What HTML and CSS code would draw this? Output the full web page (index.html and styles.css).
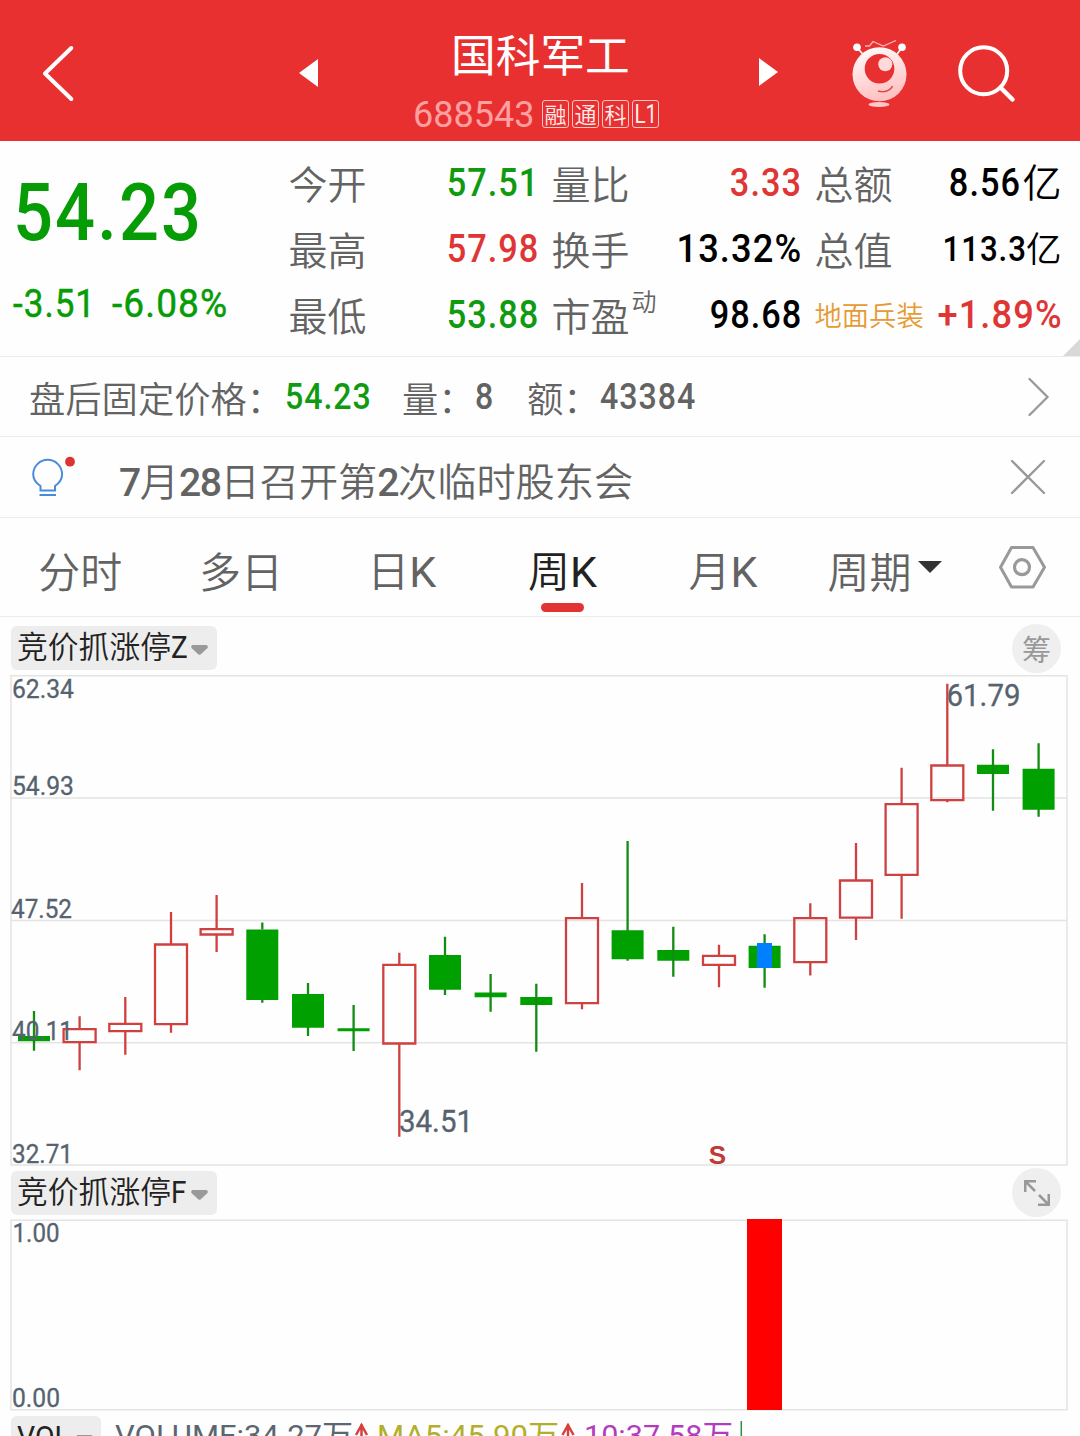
FILE: index.html
```html
<!DOCTYPE html>
<html lang="zh-CN">
<head>
<meta charset="utf-8">
<title>国科军工 688543</title>
<link rel="stylesheet" href="styles.css">
</head>
<body>
<header class="header">
  <svg class="nav-icon" width="108" height="141" viewBox="0 0 108 141"><path d="M71.300 48 45 73.500 71.300 99" fill="none" stroke="#fff" stroke-width="4" stroke-linecap="round" stroke-linejoin="round"/></svg>
  <svg class="prev" width="20" height="28" viewBox="0 0 20 28"><path d="M19 0v28L0 14z" fill="#fff"/></svg>
  <div class="title-block">
    <h1 class="title">国科军工</h1>
    <div class="sub">
      <span class="code">688543</span>
      <span class="tag">融</span><span class="tag">通</span><span class="tag">科</span><span class="tag"><span class="tag-latin">L1</span></span>
    </div>
  </div>
  <svg class="next" width="20" height="28" viewBox="0 0 20 28"><path d="M0 0v28L19 14z" fill="#fff"/></svg>
  <svg class="tools" width="240" height="141" viewBox="840 0 240 141">
    <defs><linearGradient id="bot" x1="0" y1="0" x2="0.300" y2="1"><stop offset="0" stop-color="#fff"/><stop offset="1" stop-color="#ffc2c2"/></linearGradient></defs>
    <g stroke="#fff" stroke-width="1.600" fill="none"><path d="M857 47.500l7 8M902 47.500l-6 8"/><path d="M865 46h4.500l3.500-4.500L883.300 46 896 40.500" stroke="#ffb5b5" stroke-width="1.300"/></g>
    <circle cx="857" cy="47.300" r="3.800" fill="#fff"/><circle cx="902" cy="47.300" r="3.800" fill="#fff"/>
    <circle cx="879.500" cy="74.300" r="27" fill="url(#bot)"/>
    <circle cx="879.500" cy="68.700" r="14.800" fill="#e93030"/>
    <circle cx="885.300" cy="64.300" r="7" fill="#ffdada"/>
    <path d="M878 91q10.500 2.500 14.600-4.800" fill="none" stroke="#d94b4b" stroke-width="1.500"/>
    <ellipse cx="879" cy="104.500" rx="10.500" ry="2.400" fill="#ffc8c8"/>
    <circle cx="983.700" cy="70.700" r="23.500" fill="none" stroke="#fff" stroke-width="4"/>
    <path d="M1000.500 87.500 1012.500 99.500" stroke="#fff" stroke-width="4.500" stroke-linecap="round"/>
  </svg>
</header>

<section class="quote">
  <div class="price">
    <div class="last num">54.23</div>
    <div class="change"><span class="num">-3.51</span><span class="num pct">-6.08%</span></div>
  </div>
  <div class="cell"><span>今开</span><b class="num green">57.51</b></div>
  <div class="cell"><span>量比</span><b class="num red">3.33</b></div>
  <div class="cell"><span>总额</span><b class="money"><i class="num">8.56</i><i class="unit">亿</i></b></div>
  <div class="cell"><span>最高</span><b class="num red">57.98</b></div>
  <div class="cell"><span>换手</span><b class="num pct">13.32%</b></div>
  <div class="cell"><span>总值</span><b class="money small"><i class="num">113.3</i><i class="unit">亿</i></b></div>
  <div class="cell"><span>最低</span><b class="num green">53.88</b></div>
  <div class="cell"><span>市盈<sup class="dyn">动</sup></span><b class="num">98.68</b></div>
  <div class="cell"><span class="sector">地面兵装</span><b class="num red pct">+1.89%</b></div>
  <svg class="corner" width="17" height="17" viewBox="0 0 17 17"><path d="M17 0v17H0z" fill="#d8d8d8"/></svg>
</section>

<section class="row after">
  <span class="k1">盘后固定价格：</span><span class="num v1 green">54.23</span>
  <span class="k2">量：</span><span class="num v2">8</span>
  <span class="k3">额：</span><span class="num v3">43384</span>
  <svg class="row-icon" width="24" height="40" viewBox="0 0 24 40"><path d="M2.500 2 20.500 20 2.500 38" fill="none" stroke="#999" stroke-width="2.300" stroke-linecap="round"/></svg>
</section>

<section class="row notice">
  <svg class="bulb" width="48" height="44" viewBox="30 454 48 44"><g fill="none" stroke="#4a8bd8" stroke-width="2"><path d="M40.500 490.500v-4.500c-4.500-2.800-7.300-6.700-7.300-11.700a14.400 14.400 0 0 1 28.900 0c0 5-2.800 8.900-7.100 11.700v4.500z"/><path d="M39.500 495H56"/></g><circle cx="70" cy="461.700" r="4.900" fill="#dc3434"/></svg>
  <span class="notice-text"><i>7</i>月<i>28</i>日召开第<i>2</i>次临时股东会</span>
  <svg class="row-icon close" width="36" height="36" viewBox="0 0 36 36"><path d="M2 2 34 34M34 2 2 34" fill="none" stroke="#999" stroke-width="2.300" stroke-linecap="round"/></svg>
</section>

<nav class="tabs">
  <span class="tab">分时</span>
  <span class="tab">多日</span>
  <span class="tab">日<i>K</i></span>
  <span class="tab active">周<i>K</i></span>
  <span class="tab">月<i>K</i></span>
  <span class="tab period">周期<svg width="24" height="12" viewBox="0 0 24 12"><path d="M0 0h24L12 12z" fill="#333"/></svg></span>
  <svg class="gear" width="48" height="44" viewBox="998 545 48 44"><g fill="none" stroke="#999" stroke-linejoin="round"><path d="M1011.500 547.500h21.500l11.500 19.700-11.500 19.800h-21.500L1000.500 567.200z" stroke-width="3"/><circle cx="1022" cy="567.200" r="7.500" stroke-width="3.200"/></g></svg>
</nav>

<main class="charts">
  <div class="bar">
    <span class="chip"><span>竞价抓涨停<i>Z</i></span><svg width="17" height="10" viewBox="0 0 17 10"><path d="M1.500 0h14q2 1 1 3L9.500 9.500q-1 .7-2 0L.5 3q-1-2 1-3z" fill="#999"/></svg></span>
    <span class="round">筹</span>
  </div>
  <svg class="plot" width="1080" height="492" viewBox="0 675 1080 492">
    <g fill="none" stroke="#e4e4e4" stroke-width="1.500"><path d="M11 675.700H1067V1165H11zM11 798H1067M11 920.400H1067M11 1042.800H1067"/></g>
    <g class="down-body">
      <path d="M18 1036h32v5.300h-32zM246.300 929.500h32v70.500h-32zM292 994h32v33.700h-32zM337.600 1028.200h32v3h-32zM429 955h32v34.700h-32zM474.600 992.600h32v4.700h-32zM520.300 997h32v8h-32zM611.600 930.300h32v28.900h-32zM657.300 950h32v10.700h-32zM748.600 945.700h32v22.300h-32zM977 764.700h32v9.300h-32zM1022.600 768.700h32v41h-32z"/>
    </g>
    <path class="down-wick" d="M34 1011v39.700M262.300 922.500v7M262.300 1000v2.700M308 983v11M308 1027v9M353.600 1005v46M445 936.700V955M445 989v6M490.600 974v37.700M536.300 983.700v68M627.600 841v90M627.600 959v1.700M673.300 926.700v50M764.600 934.300v53.400M993 749.300v61.400M1038.600 743.300v26M1038.600 809v7.700"/>
    <path class="up" d="M63.600 1029.200h32v12.900h-32zM79.600 1016.300v12.900M79.600 1042.100v28.200M109.300 1023.900h32v7.300h-32zM125.300 997v26.900M125.300 1031.200v23.500M155 944.500h32v79.600h-32zM171 912v32.500M171 1024.100v8.600M200.600 929.200h32v5.300h-32zM216.600 895v34.200M216.600 934.500v17.500M383.300 964.900h32v78.600h-32zM399.300 952.700v12.200M399.300 1043.500v93.200M566 918.200h32v85h-32zM582 883v35.200M582 1003.200v6M703 955.900h32v9h-32zM719 944.700v11.200M719 964.900v22.300M794.300 918.200h32v44h-32zM810.300 903.300v14.900M810.300 962.200v13.200M840 880.500h32v37.100h-32zM856 843v37.500M856 917.600V940M885.600 804.200h32v70.700h-32zM901.600 767.700v36.500M901.600 874.900v43.800M931.300 765.500h32v34.700h-32zM947.300 683.700v81.800M947.300 800.200v2"/>
    <rect x="757" y="943" width="15" height="25" fill="#0080ff"/>
    <g class="axis">
      <text x="12" y="698" textLength="62" lengthAdjust="spacingAndGlyphs">62.34</text>
      <text x="12" y="795" textLength="62" lengthAdjust="spacingAndGlyphs">54.93</text>
      <text x="11" y="918" textLength="61" lengthAdjust="spacingAndGlyphs">47.52</text>
      <text x="12" y="1040" textLength="61" lengthAdjust="spacingAndGlyphs">40.11</text>
      <text x="12" y="1163" textLength="61" lengthAdjust="spacingAndGlyphs">32.71</text>
    </g>
    <g class="extreme">
      <text x="946.500" y="705.700" textLength="74" lengthAdjust="spacingAndGlyphs">61.79</text>
      <text x="399" y="1131.700" textLength="74" lengthAdjust="spacingAndGlyphs">34.51</text>
    </g>
    <text class="signal" x="717.500" y="1163.500" text-anchor="middle">S</text>
  </svg>
  <div class="bar second">
    <span class="chip"><span>竞价抓涨停<i>F</i></span><svg width="17" height="10" viewBox="0 0 17 10"><path d="M1.500 0h14q2 1 1 3L9.500 9.500q-1 .7-2 0L.5 3q-1-2 1-3z" fill="#999"/></svg></span>
    <span class="round"><svg width="26" height="26" viewBox="0 0 26 26"><path d="M1.200 12V1.200H12M1.200 1.200 11 11M24.800 14v10.800H14M24.800 24.800 15 15" fill="none" stroke="#999" stroke-width="2.600"/></svg></span>
  </div>
  <svg class="plot" width="1080" height="193" viewBox="0 1218 1080 193">
    <path d="M11 1220.300H1067V1409.700H11z" fill="none" stroke="#e4e4e4" stroke-width="1.500"/>
    <rect x="747" y="1219" width="35" height="191" fill="#f00"/>
    <g class="axis">
      <text x="12.500" y="1242" textLength="47" lengthAdjust="spacingAndGlyphs">1.00</text>
      <text x="12" y="1406.700" textLength="48" lengthAdjust="spacingAndGlyphs">0.00</text>
    </g>
  </svg>
  <div class="bar third">
    <span class="chip vol"><i>VOL</i><svg width="17" height="10" viewBox="0 0 17 10"><path d="M1.500 0h14q2 1 1 3L9.500 9.500q-1 .7-2 0L.5 3q-1-2 1-3z" fill="#999"/></svg></span>
    <svg class="legend" width="640" height="44" viewBox="110 1416 640 44">
      <text class="slate" x="115" y="1446" textLength="238" lengthAdjust="spacingAndGlyphs">VOLUME:34.27万</text>
      <text class="olive" x="377" y="1446" textLength="182" lengthAdjust="spacingAndGlyphs">MA5:45.90万</text>
      <text class="purple" x="584" y="1446" textLength="149" lengthAdjust="spacingAndGlyphs">10:37.58万</text>
      <path d="M356 1435 361.500 1425 367 1435M361.500 1424v24M562.500 1435 568 1425 573.500 1435M568 1424v24" fill="none" stroke="#d84040" stroke-width="2.500"/>
      <path d="M741.300 1421v30" stroke="#2f8f45" stroke-width="1.500"/>
    </svg>
  </div>
</main>
</body>
</html>
```
FILE: styles.css
```css
* { box-sizing: border-box; }

html,
body {
  margin: 0;
  width: 1080px;
  height: 1436px;
  overflow: hidden;
  background: #fefefe;
}

body {
  font-family: "Noto Sans CJK SC", sans-serif;
  font-weight: 350;
  color: #636363;
}

i { font-style: normal; }
svg { display: block; flex: none; }

.num {
  display: inline-block;
  font-family: Roboto, "Liberation Sans", sans-serif;
  font-weight: 500;
  letter-spacing: 0.03em;
  white-space: nowrap;
  transform: scaleX(0.88);
  transform-origin: left center;
}

.green { color: #109a10; }
.red { color: #e03535; }

/* header */
.header {
  display: flex;
  height: 141px;
  background: #e93030;
  color: #fff;
}
.prev { margin: 59px 0 0 191px; }
.next { margin: 58px 0 0 99px; }
.tools { margin-left: 61px; }
.title-block { width: 247px; margin-left: 94px; }
.title {
  margin: 0 0 0 38px;
  padding-top: 22px;
  height: 96px;
  font-size: 44.700px;
  line-height: 61px;
  font-weight: 400;
  white-space: nowrap;
}
.sub { display: flex; gap: 3px; height: 36px; align-items: center; }
.code {
  width: 126px;
  padding-top: 1px;
  font-family: Roboto, sans-serif;
  font-size: 36px;
  line-height: 36px;
  font-weight: 400;
  color: #ffa0a0;
}
.tag {
  width: 27px;
  height: 28px;
  border: 1.500px solid #ffc4c4;
  border-radius: 3px;
  font-size: 22px;
  line-height: 24px;
  text-align: center;
  color: #ffecec;
}
.tag-latin {
  display: inline-block;
  margin: 0 -3px;
  font-family: Roboto, sans-serif;
  font-size: 25px;
  font-weight: 400;
  transform: scaleX(0.82);
}

/* quote */
.quote {
  position: relative;
  display: grid;
  grid-template-columns: 276px 263px 263px 247px;
  grid-template-rows: repeat(3, 66px);
  height: 216px;
  padding: 8px 0 0 12.500px;
  border-bottom: 1.500px solid #ececec;
}
.price { grid-row: 1 / 4; color: #069c06; }
.last { font-size: 80px; line-height: 94px; padding-top: 17px; }
.change {
  display: grid;
  grid-template-columns: 99px auto;
  justify-content: start;
  padding-top: 21px;
  font-size: 38px;
  line-height: 46px;
}
.change .num { font-weight: 400; -webkit-text-stroke: 0.500px currentColor; transform: scaleX(0.92); }
.change .pct { transform: scaleX(0.975); }
.cell {
  display: flex;
  justify-content: space-between;
  align-items: center;
  height: 66px;
  padding-right: 13px;
  font-size: 39px;
  line-height: 66px;
  white-space: nowrap;
}
.cell:nth-child(3n + 4) { padding-right: 0; }
.cell > .num { transform-origin: right center; font-size: 39px; margin-right: -1px; padding-top: 1px; }
.cell > .num:not(.red):not(.green) { color: #000; }
.cell > .pct { transform: scaleX(0.93); }
.money { display: flex; color: #000; font-weight: 350; }
.money .num { transform-origin: right center; margin-right: 1px; padding-top: 1px; }
.money .unit { margin-top: -2px; }
.money.small { font-size: 35.500px; padding-top: 2px; }
.money.small .num { margin-right: -1px; padding-top: 0; }
.dyn {
  margin-left: 2px;
  font-size: 25px;
  line-height: 1;
  vertical-align: 20px;
}
.cell sup { line-height: 0; }
.sector { font-size: 27.300px; color: #e69a32; }
.corner { position: absolute; right: 0; bottom: 0; }

/* rows */
.row {
  display: flex;
  align-items: center;
  height: 80px;
  border-bottom: 1.500px solid #ececec;
  white-space: nowrap;
}
.after { padding-left: 29px; font-size: 36.300px; }
.after .num { font-size: 36.500px; }
.k1 { width: 256px; }
.k2 { width: 73px; }
.k3 { width: 73px; }
.v1 { width: 117px; }
.v2 { width: 52px; }
.row-icon { margin: 0 29px 0 auto; }
.notice { height: 81px; padding-left: 30px; }
.bulb { margin-top: -3px; }
.notice-text { margin-left: 41px; font-size: 39.200px; line-height: 60px; padding-top: 8px; }
.notice-text i { font-family: Roboto, sans-serif; font-weight: 500; letter-spacing: -1.500px; }
.row-icon.close { margin-right: 34px; }

/* tabs */
.tabs {
  display: flex;
  align-items: center;
  height: 99px;
  border-bottom: 1.500px solid #ececec;
  font-size: 42px;
  line-height: 60px;
}
.tab { position: relative; width: 160.700px; text-align: center; padding-top: 6px; white-space: nowrap; }
.tab i { font-family: Roboto, sans-serif; font-size: 43px; font-weight: 400; }
.tab.active { color: #222; }
.tab.active::after {
  content: "";
  position: absolute;
  left: 59px;
  bottom: -10px;
  width: 43px;
  height: 9px;
  border-radius: 4.500px;
  background: #e23333;
}
.period { display: flex; align-items: center; gap: 7px; width: 171px; padding-left: 24px; }
.period svg { margin-top: -7px; }
.gear { margin-left: 24px; }

/* charts */
.bar { display: flex; justify-content: space-between; height: 58px; padding: 9px 19px 0 11px; }
.chip {
  display: flex;
  align-items: center;
  gap: 3px;
  width: 206px;
  height: 44px;
  padding: 0 0 0 6px;
  border-radius: 6px;
  background: #ededed;
  color: #222;
  font-size: 30.800px;
  line-height: 38px;
  white-space: nowrap;
}
.chip > span { width: 171px; height: 44px; }
.chip i { font-family: Roboto, sans-serif; font-size: 31px; font-weight: 400; display: inline-block; transform: scaleX(0.9); transform-origin: left; }
.chip svg { margin-top: 4px; }
.round {
  display: flex;
  align-items: center;
  justify-content: center;
  width: 49px;
  height: 49px;
  margin-top: -2px;
  border-radius: 50%;
  background: #efefef;
  color: #999;
  font-size: 29px;
  line-height: 1;
  font-weight: 400;
}
.second { height: 51px; padding-top: 4px; }
.second .round { margin-top: -3px; }
.third { height: 49px; padding-top: 5px; justify-content: flex-start; }
.vol { width: 90px; gap: 0; }
.chip.vol i { width: 59px; font-size: 30px; line-height: 40px; margin-top: -3px; transform: scaleX(0.95); }
.vol svg { margin-top: 3px; }
.legend { margin-left: 9px; }

.down-body { fill: #00a000; }
.down-wick { fill: none; stroke: #138c13; stroke-width: 2.300; }
.up { fill: none; stroke: #cf4040; stroke-width: 2.300; }
.plot { overflow: visible; }
.plot text, .legend text { font-family: Roboto, "Noto Sans CJK SC", sans-serif; font-weight: 400; }
.axis text { font-size: 25.500px; fill: #56636f; stroke: #56636f; stroke-width: 0.300px; }
.extreme text { font-size: 30.500px; fill: #56636f; stroke: #56636f; stroke-width: 0.300px; }
.plot .signal { font: bold 26px "Liberation Sans", sans-serif; fill: #c03a38; }
.legend text { font-size: 30px; }
.slate { fill: #5c6670; }
.olive { fill: #b3ae2c; }
.purple { fill: #b23cc0; }
```
